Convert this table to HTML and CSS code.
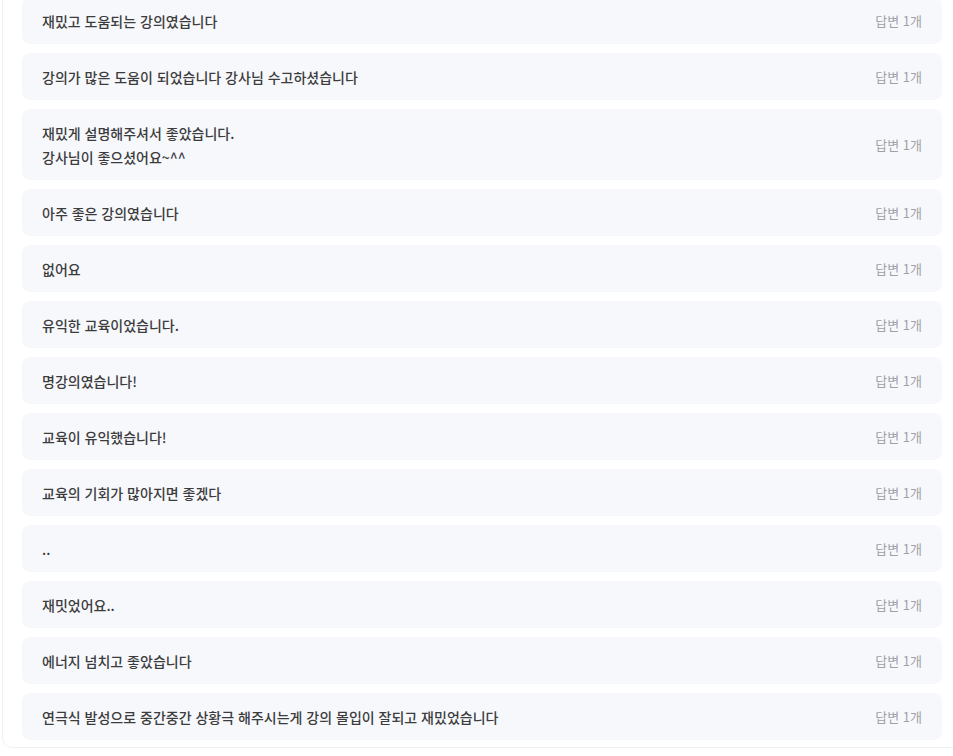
FILE: index.html
```html
<!DOCTYPE html>
<html lang="ko">
<head>
  <meta charset="UTF-8" />
  <meta name="viewport" content="width=device-width, initial-scale=1.0"/>
  <title>수강 후기</title>
  <link rel="stylesheet" href="styles.css">
</head>
<body>

  <div class="panel">
    <ul class="review-list">
      <li class="review">
        <p class="review-text">재밌고 도움되는 강의였습니다</p>
        <span class="reply-count">답변 1개</span>
      </li>
      <li class="review">
        <p class="review-text">강의가 많은 도움이 되었습니다 강사님 수고하셨습니다</p>
        <span class="reply-count">답변 1개</span>
      </li>
      <li class="review">
        <p class="review-text">재밌게 설명해주셔서 좋았습니다.<br>강사님이 좋으셨어요~^^</p>
        <span class="reply-count">답변 1개</span>
      </li>
      <li class="review">
        <p class="review-text">아주 좋은 강의였습니다</p>
        <span class="reply-count">답변 1개</span>
      </li>
      <li class="review">
        <p class="review-text">없어요</p>
        <span class="reply-count">답변 1개</span>
      </li>
      <li class="review">
        <p class="review-text">유익한 교육이었습니다.</p>
        <span class="reply-count">답변 1개</span>
      </li>
      <li class="review">
        <p class="review-text">명강의였습니다!</p>
        <span class="reply-count">답변 1개</span>
      </li>
      <li class="review">
        <p class="review-text">교육이 유익했습니다!</p>
        <span class="reply-count">답변 1개</span>
      </li>
      <li class="review">
        <p class="review-text">교육의 기회가 많아지면 좋겠다</p>
        <span class="reply-count">답변 1개</span>
      </li>
      <li class="review">
        <p class="review-text">..</p>
        <span class="reply-count">답변 1개</span>
      </li>
      <li class="review">
        <p class="review-text">재밋었어요..</p>
        <span class="reply-count">답변 1개</span>
      </li>
      <li class="review">
        <p class="review-text">에너지 넘치고 좋았습니다</p>
        <span class="reply-count">답변 1개</span>
      </li>
      <li class="review">
        <p class="review-text">연극식 발성으로 중간중간 상황극 해주시는게 강의 몰입이 잘되고 재밌었습니다</p>
        <span class="reply-count">답변 1개</span>
      </li>
    </ul>
  </div>

</body>
</html>
```

FILE: styles.css
```css
html, body {
  margin: 0;
  padding: 0;
  background-color: #ffffff;
  overflow: hidden;
}

body {
  font-family: 'Noto Sans CJK KR', 'Noto Sans', sans-serif;
  color: #3c3c3c;
}

.panel {
  box-sizing: border-box;
  width: 961px;
  margin-left: 2px;
  margin-top: -14px;
  padding: 10px 20px 7px 19px;
  border: 1px solid #eff0f4;
  border-radius: 10px;
  background-color: #ffffff;
}

.review-list {
  list-style: none;
  margin: 0;
  padding: 0;
  display: flex;
  flex-direction: column;
  gap: 9px;
}

.review {
  display: flex;
  justify-content: space-between;
  align-items: center;
  padding: 11.5px 20px;
  border-radius: 8px;
  background-color: #f7f8fc;
}

.review-text {
  margin: 0;
  font-size: 14px;
  font-weight: 500;
  line-height: 24px;
  color: #3c3c3c;
}

.reply-count {
  flex-shrink: 0;
  font-size: 13px;
  line-height: 24px;
  color: #9fa1a7;
}
```
